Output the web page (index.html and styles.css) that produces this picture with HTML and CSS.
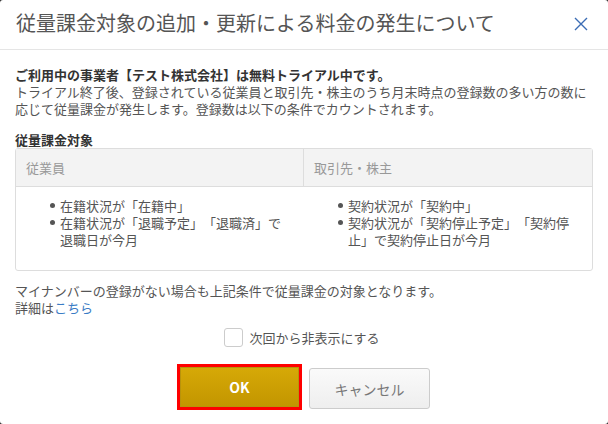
FILE: index.html
```html
<!DOCTYPE html>
<html lang="ja">
<head>
<meta charset="utf-8">
<link rel="stylesheet" href="styles.css">
</head>
<body>
<div class="dialog">
  <div class="dialog-header">
    <h1 class="dialog-title">従量課金対象の追加・更新による料金の発生について</h1>
    <button class="close-btn" aria-label="閉じる">
      <svg width="14" height="14" viewBox="0 0 14 14"><path d="M1 1 L13 13 M13 1 L1 13" stroke="#3b6cb4" stroke-width="1.4" fill="none"/></svg>
    </button>
  </div>
  <div class="dialog-body">
    <p class="intro"><strong>ご利用中の事業者【テスト株式会社】は無料トライアル中です。</strong><br>トライアル終了後、登録されている従業員と取引先・株主のうち月末時点の登録数の多い方の数に応じて従量課金が発生します。登録数は以下の条件でカウントされます。</p>
    <h2 class="section-title">従量課金対象</h2>
    <table class="target-table">
      <thead>
        <tr><th>従業員</th><th>取引先・株主</th></tr>
      </thead>
      <tbody>
        <tr>
          <td><ul><li>在籍状況が「在籍中」</li><li>在籍状況が「退職予定」「退職済」で退職日が今月</li></ul></td>
          <td><ul><li>契約状況が「契約中」</li><li>契約状況が「契約停止予定」「契約停止」で契約停止日が今月</li></ul></td>
        </tr>
      </tbody>
    </table>
    <p class="note">マイナンバーの登録がない場合も上記条件で従量課金の対象となります。<br>詳細は<a href="#" class="link">こちら</a></p>
    <label class="check-row"><span class="checkbox"></span><span>次回から非表示にする</span></label>
    <div class="actions">
      <button class="btn btn-ok">OK</button>
      <button class="btn btn-cancel">キャンセル</button>
    </div>
  </div>
</div>
</body>
</html>
```
FILE: styles.css
```css
* { box-sizing: border-box; }
html, body { margin: 0; padding: 0; background: #2b2b2b; }
body {
  font-family: "Noto Sans CJK JP", "Noto Sans", sans-serif;
  color: #555;
  font-size: 13px;
  line-height: 17px;
  text-spacing-trim: space-all;
}
.dialog {
  width: 608px;
  height: 424px;
  background: #fff;
  border-radius: 3px;
  overflow: hidden;
}
.dialog-header {
  height: 50px;
  border-bottom: 1px solid #e5e5e5;
  display: flex;
  align-items: center;
  justify-content: space-between;
  padding: 0 20px 0 16px;
}
.dialog-title {
  margin: 0;
  font-size: 20px;
  font-weight: normal;
  color: #555;
  line-height: 24px;
  padding-bottom: 4px;
}
.close-btn {
  border: 0;
  background: none;
  padding: 0;
  width: 14px;
  height: 14px;
  display: flex;
  margin-top: -2px;
}
.dialog-body {
  padding: 16px 15px 0 15px;
}
.intro { margin: 0; }
.intro strong { color: #333; font-weight: bold; }
.section-title {
  margin: 14px 0 0;
  font-size: 13px;
  line-height: 17px;
  font-weight: bold;
  color: #333;
}
.target-table {
  width: 578px;
  border-collapse: separate;
  border-spacing: 0;
  border: 1px solid #ddd;
  border-radius: 3px;
  table-layout: fixed;
}
.target-table th {
  background: #f3f3f3;
  color: #999;
  font-weight: normal;
  text-align: left;
  padding: 10px 10px;
  border-bottom: 1px solid #ddd;
}
.target-table th:first-child { border-right: 1px solid #ddd; }
.target-table td {
  padding: 10px 14px 22px 10px;
  vertical-align: top;
}
.target-table ul {
  margin: 0;
  padding-left: 24px;
  list-style: none;
}
.target-table li {
  display: flex;
}
.target-table li::before {
  content: "";
  flex: none;
  width: 5px;
  height: 5px;
  border-radius: 50%;
  background: #555;
  margin: 6px 5px 0 0;
}
.note { margin: 11px 0 0; }
.link { color: #3a7cc5; text-decoration: none; }
.check-row {
  display: flex;
  justify-content: center;
  align-items: center;
  gap: 6px;
  margin-top: 12px;
  padding-right: 4px;
}
.checkbox {
  width: 19px;
  height: 19px;
  border: 1px solid #ccc;
  border-radius: 3px;
  background: #fff;
}
.actions {
  display: flex;
  justify-content: center;
  gap: 10px;
  margin-top: 20px;
  padding-left: 2px;
}
.btn {
  font-family: "Noto Sans CJK JP", "Noto Sans", sans-serif;
  height: 40px;
  font-size: 14px;
}
.btn-ok {
  width: 119px;
  color: #fff;
  font-weight: bold;
  border: 1px solid #b8930a;
  border-radius: 0;
  background: linear-gradient(#d6a907, #c39600);
  outline: 3px solid #ff0000;
  outline-offset: 0;
}
.btn-cancel {
  width: 121px;
  height: 41px;
  margin-top: 1px;
  color: #777;
  border: 1px solid #ccc;
  border-radius: 3px;
  background: linear-gradient(#fafafa, #eeeeee);
}
```
